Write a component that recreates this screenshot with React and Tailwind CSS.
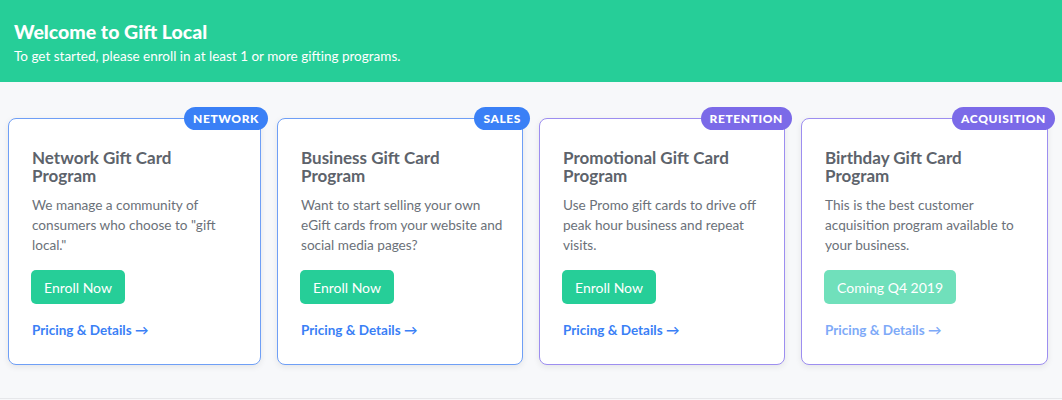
import React from "react";

const cards = [
  {
    badge: "NETWORK",
    badgeBg: "bg-[#3a80f6]",
    border: "border-[#6f9ff6]",
    title: "Network Gift Card Program",
    desc: 'We manage a community of consumers who choose to "gift local."',
    button: "Enroll Now",
    disabled: false,
  },
  {
    badge: "SALES",
    badgeBg: "bg-[#3a80f6]",
    border: "border-[#6f9ff6]",
    title: "Business Gift Card Program",
    desc: "Want to start selling your own eGift cards from your website and social media pages?",
    button: "Enroll Now",
    disabled: false,
  },
  {
    badge: "RETENTION",
    badgeBg: "bg-[#7b6ae8]",
    border: "border-[#9d8ef0]",
    title: "Promotional Gift Card Program",
    desc: "Use Promo gift cards to drive off peak hour business and repeat visits.",
    button: "Enroll Now",
    disabled: false,
  },
  {
    badge: "ACQUISITION",
    badgeBg: "bg-[#7b6ae8]",
    border: "border-[#9d8ef0]",
    title: "Birthday Gift Card Program",
    desc: "This is the best customer acquisition program available to your business.",
    button: "Coming Q4 2019",
    disabled: true,
  },
];

function Card({ c }) {
  return (
    <div
      className={`relative rounded-[8px] border bg-white ${c.border} pl-[23px] pr-[10px] pt-[30px] pb-[24px] shadow-[0_2px_6px_rgba(0,0,0,0.08)]`}
    >
      <span
        className={`absolute -top-[12px] -right-[8px] rounded-full ${c.badgeBg} px-[9px] h-[23px] flex items-center text-[12px] font-black tracking-[0.05em] text-white`}
      >
        {c.badge}
      </span>
      <h2 className="text-[17px] font-bold leading-[18px] text-[#5d636b] pr-[14px]">
        {c.title}
      </h2>
      <p className="mt-[10px] text-[13.6px] leading-[20px] text-[#6b7179]">{c.desc}</p>
      <div className="mt-[15px] flex">
        <button
          className={`-ml-px h-[34px] rounded-[5px] px-[13px] text-[14px] text-white ${
            c.disabled ? "bg-[#70e0bb]" : "bg-[#26ce98]"
          }`}
        >
          {c.button}
        </button>
      </div>
      <a
        className={`mt-[16px] block text-[13.5px] font-bold leading-[20px] ${
          c.disabled ? "text-[#7eaaf8]" : "text-[#3a80f6]"
        }`}
      >
        Pricing &amp; Details →
      </a>
    </div>
  );
}

export default function App() {
  return (
    <div className="min-h-[400px] bg-[#f7f8fa] font-['Lato','Noto_Sans',sans-serif]">
      <header className="h-[82px] bg-[#26ce98] px-[14px] pt-[20px] text-white">
        <h1 className="text-[19.5px] font-black leading-[24px]">Welcome to Gift Local</h1>
        <p className="mt-[3px] text-[13.5px] leading-[18px]">
          To get started, please enroll in at least 1 or more gifting programs.
        </p>
      </header>
      <main className="h-[317px] border-b border-[#e6e7ea] pt-[36px] pl-[8px]">
        <div className="grid grid-cols-[253px_246px_246px_247px] gap-x-4">
          {cards.map((c) => (
            <Card key={c.badge} c={c} />
          ))}
        </div>
      </main>
    </div>
  );
}
